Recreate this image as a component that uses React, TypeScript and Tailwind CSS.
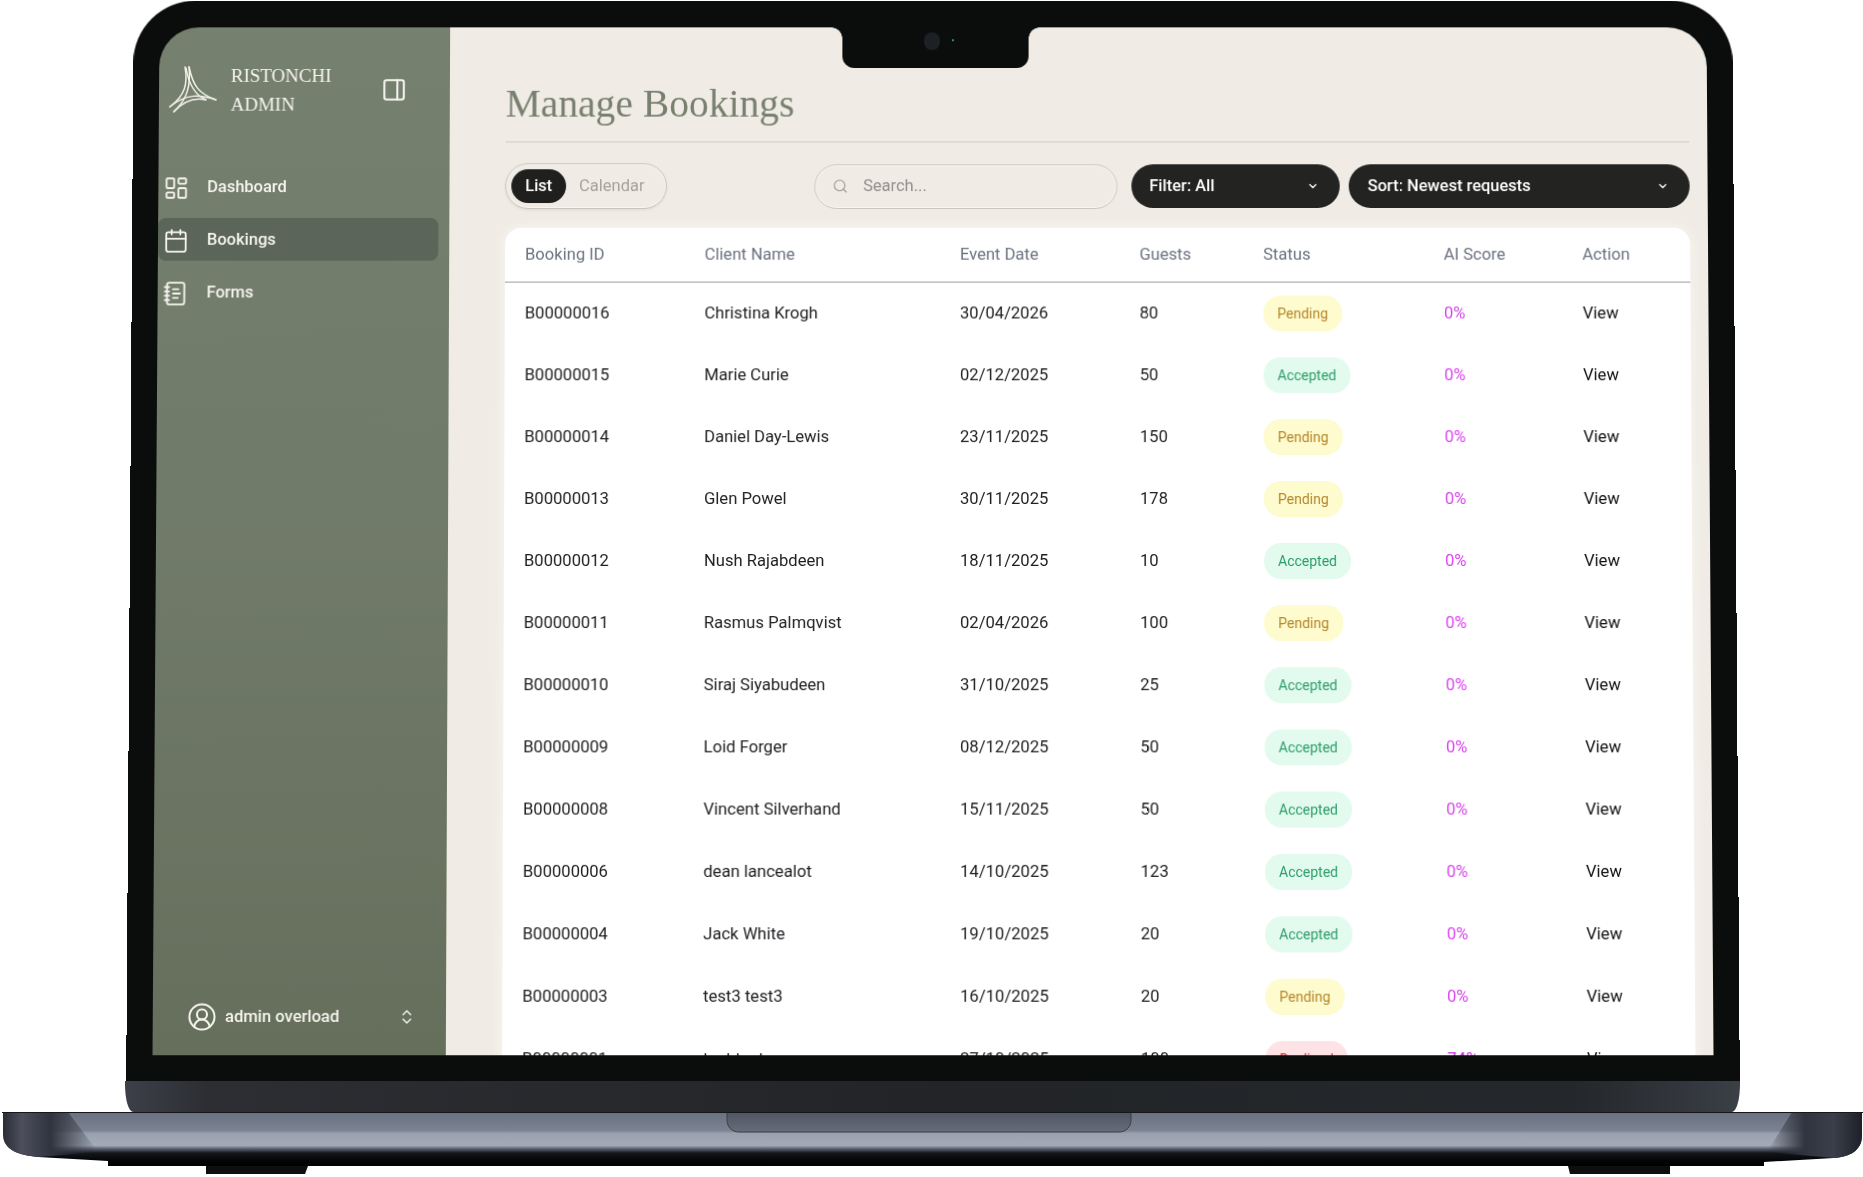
import { Calendar, ChevronDown, ChevronsUpDown, CircleUserRound, LayoutDashboard, NotebookText, PanelRight, Search } from "lucide-react";

type Status = "Pending" | "Accepted" | "Declined";

const bookings: { id: string; client: string; date: string; guests: number; status: Status; score: string }[] = [
    { id: "B00000016", client: "Christina Krogh", date: "30/04/2026", guests: 80, status: "Pending", score: "0%" },
    { id: "B00000015", client: "Marie Curie", date: "02/12/2025", guests: 50, status: "Accepted", score: "0%" },
    { id: "B00000014", client: "Daniel Day-Lewis", date: "23/11/2025", guests: 150, status: "Pending", score: "0%" },
    { id: "B00000013", client: "Glen Powel", date: "30/11/2025", guests: 178, status: "Pending", score: "0%" },
    { id: "B00000012", client: "Nush Rajabdeen", date: "18/11/2025", guests: 10, status: "Accepted", score: "0%" },
    { id: "B00000011", client: "Rasmus Palmqvist", date: "02/04/2026", guests: 100, status: "Pending", score: "0%" },
    { id: "B00000010", client: "Siraj Siyabudeen", date: "31/10/2025", guests: 25, status: "Accepted", score: "0%" },
    { id: "B00000009", client: "Loid Forger", date: "08/12/2025", guests: 50, status: "Accepted", score: "0%" },
    { id: "B00000008", client: "Vincent Silverhand", date: "15/11/2025", guests: 50, status: "Accepted", score: "0%" },
    { id: "B00000006", client: "dean lancealot", date: "14/10/2025", guests: 123, status: "Accepted", score: "0%" },
    { id: "B00000004", client: "Jack White", date: "19/10/2025", guests: 20, status: "Accepted", score: "0%" },
    { id: "B00000003", client: "test3 test3", date: "16/10/2025", guests: 20, status: "Pending", score: "0%" },
    { id: "B00000001", client: "test test", date: "27/10/2025", guests: 100, status: "Declined", score: "74%" },
];

const statusStyles: Record<Status, string> = {
    Pending: "bg-[#fefbce] text-[#b5852b]",
    Accepted: "bg-[#e3fbef] text-[#2c9c68]",
    Declined: "bg-[#fde3e5] text-[#d0343c]",
};

const navItems = [
    { label: "Dashboard", icon: LayoutDashboard, active: false },
    { label: "Bookings", icon: Calendar, active: true },
    { label: "Forms", icon: NotebookText, active: false },
];

const columns = ["Booking ID", "Client Name", "Event Date", "Guests", "Status", "AI Score", "Action"];

function Logo() {
    return (
        <svg viewBox="0 0 70 60" className="w-[70px] h-[60px] shrink-0" fill="none" stroke="#f3f2e8" strokeWidth="1.5" strokeLinecap="round">
            <path d="M24 7 C27 24 24 36 9 47" />
            <path d="M28 7 C30 26 26 40 13 52" />
            <path d="M28 7 C32 26 38 34 55 40" />
            <path d="M25 8 C28 26 36 36 45 40" />
            <path d="M9 47 C26 33 40 35 55 40" />
            <path d="M13 52 C24 40 36 38 45 40" />
        </svg>
    );
}

function Sidebar() {
    return (
        <aside className="w-[292px] shrink-0 flex flex-col bg-[linear-gradient(180deg,#75806f_0%,#717b6a_45%,#666f5c_100%)] text-[#f6f5ee]">
            <div className="flex items-center h-[96px] pt-[30px] pl-[2px]">
                <Logo />
                <div className="font-['Liberation_Serif',serif] text-[19px] leading-[29px]">
                    <div>RISTONCHI</div>
                    <div>ADMIN</div>
                </div>
                <PanelRight size={26} strokeWidth={1.9} className="ml-[50px]" />
            </div>
            <nav className="mt-[43px] mr-[11px] flex flex-col gap-[10px]">
                {navItems.map((item) => (
                    <div
                        key={item.label}
                        className={`flex items-center gap-[18px] h-[43px] pt-[2px] pl-[5px] rounded-lg text-[16.5px] font-medium ${item.active ? "bg-[#5b6559]" : ""}`}
                    >
                        <item.icon size={26} strokeWidth={1.7} />
                        {item.label}
                    </div>
                ))}
            </nav>
            <div className="mt-auto mb-[25px] pl-[36px] pr-[30px] flex items-center h-[26px] text-[16.5px] font-medium">
                <CircleUserRound size={30} strokeWidth={1.6} className="-ml-[2px]" />
                <span className="ml-[8px]">admin overload</span>
                <ChevronsUpDown size={18} strokeWidth={1.8} className="ml-auto" />
            </div>
        </aside>
    );
}

function Toolbar() {
    return (
        <div className="mt-[21px] flex items-center h-[46px] text-[16.5px]">
            <div className="w-[162px] h-[46px] flex items-center gap-[13px] pl-[5px] rounded-full border border-[#c8c5bc] shadow-[inset_0_0_0_1px_#f7f5f0,0_1px_3px_rgba(0,0,0,0.08)]">
                <span className="flex items-center h-[34px] px-[14px] rounded-full bg-[#1f1f1e] text-white font-medium">List</span>
                <span className="text-[#a4a29a]">Calendar</span>
            </div>
            <div className="ml-auto w-[304px] h-[45px] flex items-center pl-[17px] rounded-full border border-[#cbc8c0] text-[#8f8e88] shadow-[inset_0_0_0_1px_#f7f5f0]">
                <Search size={16} strokeWidth={1.6} className="text-[#97968f]" />
                <span className="ml-[15px]">Search...</span>
            </div>
            <div className="ml-[14px] w-[209px] h-[44px] flex items-center justify-between pl-[18px] pr-[21px] rounded-full bg-[#232322] text-white font-medium">
                Filter: All
                <ChevronDown size={12} strokeWidth={2.5} />
            </div>
            <div className="ml-[9px] w-[342px] h-[44px] flex items-center justify-between pl-[19px] pr-[21px] rounded-full bg-[#232322] text-white font-medium">
                Sort: Newest requests
                <ChevronDown size={12} strokeWidth={2.5} />
            </div>
        </div>
    );
}

function BookingsTable() {
    return (
        <div className="mt-[19px] bg-white rounded-t-[16px] shadow-[0_0_12px_rgba(255,255,255,0.6)]">
            <table className="w-full table-fixed text-[16.6px] text-left">
                <colgroup>
                    <col className="w-[181px]" />
                    <col className="w-[256px]" />
                    <col className="w-[180px]" />
                    <col className="w-[124px]" />
                    <col className="w-[181px]" />
                    <col className="w-[139px]" />
                    <col />
                </colgroup>
                <thead>
                    <tr className="h-[54px] border-b border-[#9b9da1] text-[#6b7280]">
                        {columns.map((column, i) => (
                            <th key={column} className={`pt-[2px] font-normal ${i === 0 ? "pl-[20px]" : "pl-[19px]"}`}>
                                {column}
                            </th>
                        ))}
                    </tr>
                </thead>
                <tbody className="text-[#1e1e22]">
                    {bookings.map((booking) => (
                        <tr key={booking.id} className="h-[62px]">
                            <td className="pt-[2px] pl-[20px]">{booking.id}</td>
                            <td className="pt-[2px] pl-[19px]">{booking.client}</td>
                            <td className="pt-[2px] pl-[19px]">{booking.date}</td>
                            <td className="pt-[2px] pl-[19px]">{booking.guests}</td>
                            <td className="pt-[2px] pl-[19px]">
                                <span className={`inline-flex items-center h-[36px] px-[14px] rounded-[17px] text-[14px] ${statusStyles[booking.status]}`}>
                                    {booking.status}
                                </span>
                            </td>
                            <td className={`pt-[2px] pl-[19px] ${booking.score === "0%" ? "text-[#d946ef]" : "text-[#c026d3]"}`}>{booking.score}</td>
                            <td className="pt-[2px] pl-[19px] text-[#111111]">View</td>
                        </tr>
                    ))}
                </tbody>
            </table>
        </div>
    );
}

export default function App() {
    return (
        <div className="w-[1863px] h-[1177px] overflow-hidden bg-white pl-[2px] flex flex-col items-center font-[Roboto,sans-serif]">
            {/* lid, tilted slightly like the mockup photo */}
            <div className="relative z-10 -mt-[2px] w-[1606px] h-[1081px] shrink-0 px-[26px] pt-[27px] bg-[#0b0c0c] rounded-t-[62px] [transform:perspective(2000px)_rotateX(1deg)]">
                <div className="relative flex h-[1028px] rounded-t-[40px] overflow-hidden">
                    <Sidebar />
                    <main className="flex-1 min-w-0 pl-[56px] pr-[18px] bg-[#f0ece5]">
                        <h1 className="pt-[49px] h-[116px] border-b border-[#cfccc4] font-['Liberation_Serif',serif] text-[39.7px] leading-[56px] text-[#78806f]">
                            Manage Bookings
                        </h1>
                        <Toolbar />
                        <BookingsTable />
                    </main>
                    {/* notch */}
                    <div className="absolute top-0 left-[686px] w-[187px] h-[41px] rounded-b-[12px] bg-[#0b0c0c]">
                        <div className="absolute top-0 -left-[11px] w-[11px] h-[11px] bg-[radial-gradient(circle_at_0_100%,transparent_10.5px,#0b0c0c_11px)]" />
                        <div className="absolute top-0 -right-[11px] w-[11px] h-[11px] bg-[radial-gradient(circle_at_100%_100%,transparent_10.5px,#0b0c0c_11px)]" />
                        <div className="absolute top-[5px] left-[82px] w-[16px] h-[18px] rounded-full bg-[#1d2024]" />
                        <div className="absolute top-[12px] left-[110px] w-[2px] h-[2px] rounded-full bg-[#2fd35a]" />
                    </div>
                </div>
            </div>
            {/* hinge */}
            <div className="mt-[2px] w-[1615px] h-[31px] shrink-0 rounded-bl-[8px_28px] rounded-br-[8px_28px] bg-[linear-gradient(90deg,#3d4049_0%,#2c2e33_5%,#222427_50%,#24282c_90%,#3b3f46_100%)]" />
            {/* base */}
            <svg viewBox="0 0 1861 64" className="w-[1861px] h-[64px] shrink-0">
                <defs>
                    <linearGradient id="base" x1="0" y1="0" x2="0" y2="1">
                        <stop offset="0" stopColor="#697080" />
                        <stop offset="0.34" stopColor="#7b8291" />
                        <stop offset="0.4" stopColor="#9aa2b0" />
                        <stop offset="0.62" stopColor="#a2aab8" />
                        <stop offset="0.68" stopColor="#5d6370" />
                        <stop offset="0.76" stopColor="#14161b" />
                        <stop offset="0.9" stopColor="#030405" />
                        <stop offset="1" stopColor="#000000" />
                    </linearGradient>
                    <linearGradient id="edgeLeft" x1="0" y1="0" x2="1" y2="0">
                        <stop offset="0" stopColor="#2a2c35" />
                        <stop offset="0.2" stopColor="#4d505c" />
                        <stop offset="0.5" stopColor="#30343f" />
                        <stop offset="1" stopColor="#30343f" stopOpacity="0" />
                    </linearGradient>
                    <linearGradient id="edgeRight" x1="1" y1="0" x2="0" y2="0">
                        <stop offset="0" stopColor="#1d2027" />
                        <stop offset="0.3" stopColor="#3b3f4a" />
                        <stop offset="0.6" stopColor="#30343f" />
                        <stop offset="1" stopColor="#30343f" stopOpacity="0" />
                    </linearGradient>
                    <linearGradient id="notch" x1="0" y1="0" x2="0" y2="1">
                        <stop offset="0" stopColor="#4f5561" />
                        <stop offset="1" stopColor="#666c79" />
                    </linearGradient>
                </defs>
                <path d="M106 50 H204 V62 H303 L306 54 H1566 L1568 62 H1668 V54 H1762 V50 Z" fill="#0d0e10" />
                <path d="M1 0 H1860 V24 C1860 38 1848 45 1832 46 L1762 50 V54 H106 V49 L36 45 C16 43 1 38 1 22 Z" fill="url(#base)" />
                <path d="M1 0 H66 L96 40 L36 45 C16 43 1 38 1 22 Z" fill="url(#edgeLeft)" />
                <path d="M1860 0 H1790 L1765 40 L1832 46 C1848 45 1860 38 1860 24 Z" fill="url(#edgeRight)" />
                <path d="M725 0 H1129 V8 C1129 15 1124 20 1117 20 H737 C730 20 725 15 725 8 Z" fill="url(#notch)" stroke="#3b4049" />
                <rect x="0" y="0" width="1861" height="1" fill="#15171b" />
            </svg>
        </div>
    );
}
